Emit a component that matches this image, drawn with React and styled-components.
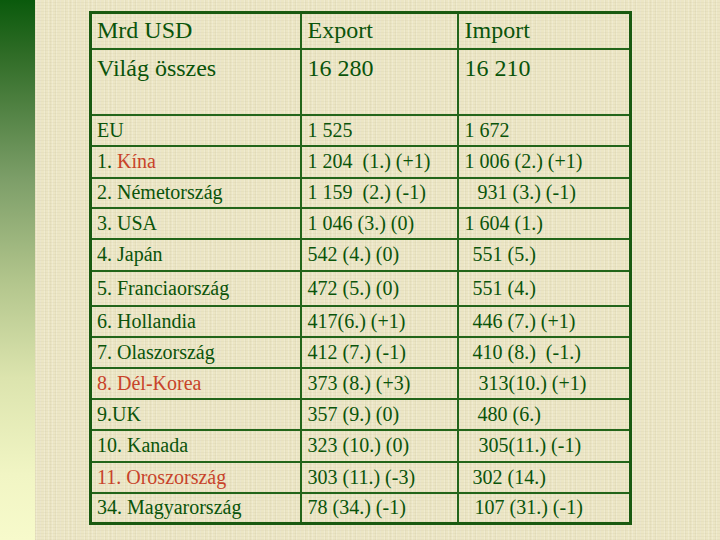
import React from "react";
import styled, { createGlobalStyle } from "styled-components";

const GlobalStyle = createGlobalStyle`
  html, body {
    margin: 0;
    padding: 0;
    width: 720px;
    height: 540px;
    overflow: hidden;
  }
`;

const Page = styled.div`
  display: flex;
  width: 720px;
  height: 540px;
  background-color: #ece6c5;
  background-image:
    repeating-linear-gradient(0deg, rgba(120, 110, 70, 0.05) 0 1px, transparent 1px 3px),
    repeating-linear-gradient(90deg, rgba(255, 255, 255, 0.2) 0 1px, transparent 1px 4px),
    repeating-linear-gradient(90deg, rgba(120, 110, 70, 0.05) 0 1px, transparent 1px 5px);
  font-family: "Liberation Serif", "Times New Roman", serif;
`;

const SideBar = styled.div`
  width: 35px;
  flex-shrink: 0;
  background: linear-gradient(
    180deg,
    #0a5a0c 0%,
    #2f6c26 10%,
    #7c9e68 33%,
    #b2c58c 52%,
    #dce4ae 70%,
    #f1f5c4 88%,
    #f7facb 100%
  );
`;

const Content = styled.div`
  flex: 1;
  padding: 11px 0 0 54px;
`;

const Table = styled.table`
  border-collapse: collapse;
  border: 3px solid #1a5a10;
  color: #0a540a;
`;

const Row = styled.tr`
  height: ${(p) => p.h}px;
`;

const Cell = styled.td`
  border: 2px solid #23651a;
  padding: ${(p) => (p.top ? "5px" : "0")} 0 0 ${(p) => 5 + (p.indent || 0)}px;
  vertical-align: ${(p) => (p.top ? "top" : "middle")};
  font-size: ${(p) => (p.head ? 24 : 20)}px;
  white-space: pre;
  width: ${(p) => p.w || "auto"};
  box-sizing: border-box;
`;

const Red = styled.span`
  color: #c8432a;
`;

const rows = [
  ["EU", "1 525", "1 672", 31, 0],
  [<>1. <Red>Kína</Red></>, "1 204  (1.) (+1)", "1 006 (2.) (+1)", 32, 0],
  ["2. Németország", "1 159  (2.) (-1)", "931 (3.) (-1)", 30, 13],
  ["3. USA", "1 046 (3.) (0)", "1 604 (1.)", 31, 0],
  ["4. Japán", "542 (4.) (0)", "551 (5.)", 32, 8],
  ["5. Franciaország", "472 (5.) (0)", "551 (4.)", 35, 8],
  ["6. Hollandia", "417(6.) (+1)", "446 (7.) (+1)", 31, 8],
  ["7. Olaszország", "412 (7.) (-1)", "410 (8.)  (-1.)", 31, 8],
  [<Red>8. Dél-Korea</Red>, "373 (8.) (+3)", "313(10.) (+1)", 31, 14],
  ["9.UK", "357 (9.) (0)", "480 (6.)", 31, 13],
  ["10. Kanada", "323 (10.) (0)", "305(11.) (-1)", 32, 14],
  [<Red>11. Oroszország</Red>, "303 (11.) (-3)", "302 (14.)", 31, 8],
  ["34. Magyarország", "78 (34.) (-1)", "107 (31.) (-1)", 31, 10],
];

export default function App() {
  return (
    <>
      <GlobalStyle />
      <Page>
        <SideBar />
        <Content>
          <Table>
            <tbody>
              <Row h={36}>
                <Cell head w="210px">Mrd USD</Cell>
                <Cell head w="157px" indent={1}>Export</Cell>
                <Cell head w="173px" indent={1}>Import</Cell>
              </Row>
              <Row h={66}>
                <Cell head top>Világ összes</Cell>
                <Cell head top indent={1}>16 280</Cell>
                <Cell head top indent={1}>16 210</Cell>
              </Row>
              {rows.map(([name, exp, imp, h, ind], i) => (
                <Row key={i} h={h}>
                  <Cell>{name}</Cell>
                  <Cell indent={1}>{exp}</Cell>
                  <Cell indent={1 + ind}>{imp}</Cell>
                </Row>
              ))}
            </tbody>
          </Table>
        </Content>
      </Page>
    </>
  );
}
